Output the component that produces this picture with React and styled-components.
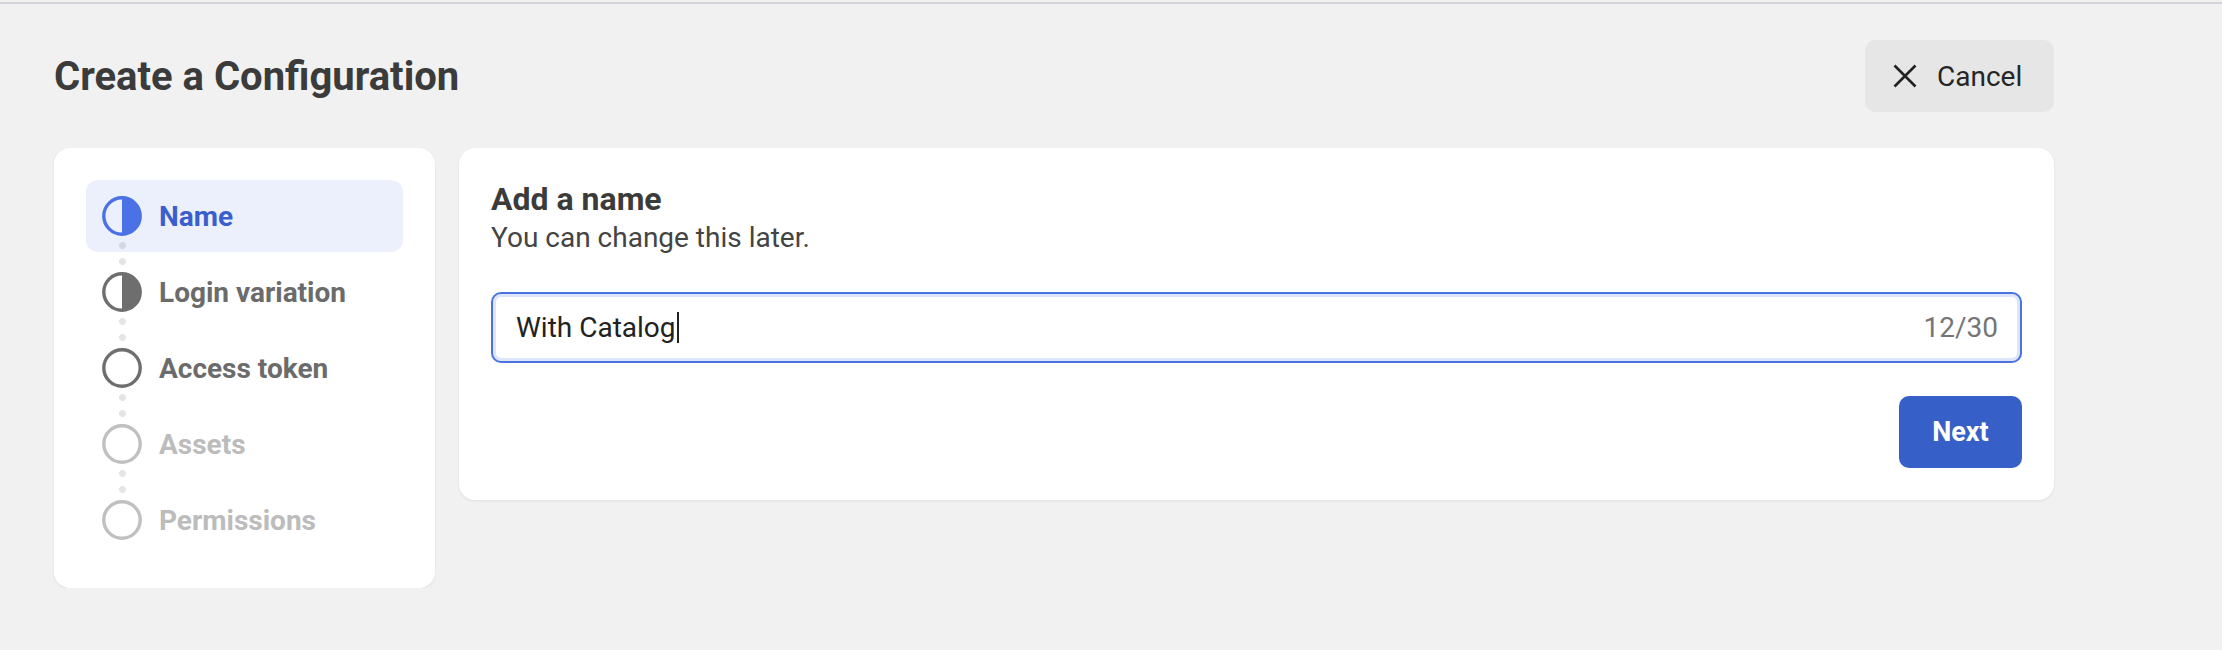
import React from "react";
import styled, { createGlobalStyle } from "styled-components";

const GlobalStyle = createGlobalStyle`
  html, body {
    margin: 0;
    padding: 0;
    background: #f1f1f1;
    font-family: Roboto, "Liberation Sans", Arial, sans-serif;
  }
  * {
    box-sizing: border-box;
  }
`;

const steps = [
  { label: "Name", state: "active" },
  { label: "Login variation", state: "partial" },
  { label: "Access token", state: "open" },
  { label: "Assets", state: "upcoming" },
  { label: "Permissions", state: "upcoming" },
];

const tones = {
  active: { ring: "#4a72e6", text: "#3a5fcc" },
  partial: { ring: "#6e6e6e", text: "#6b6b6b" },
  open: { ring: "#6e6e6e", text: "#6b6b6b" },
  upcoming: { ring: "#c0c0c0", text: "#bcbcbc" },
};

const StepIcon = ({ state }) => {
  const color = tones[state].ring;
  const half = state === "active" || state === "partial";
  return (
    <svg width="40" height="40" viewBox="0 0 40 40">
      <circle cx="20" cy="20" r="18.2" fill="none" stroke={color} strokeWidth="3.4" />
      {half && <path d="M20 1.8 A18.2 18.2 0 0 1 20 38.2 Z" fill={color} />}
    </svg>
  );
};

const CloseIcon = () => (
  <svg width="24" height="24" viewBox="0 0 24 24">
    <path d="M1.5 1.5 L22.5 22.5 M22.5 1.5 L1.5 22.5" stroke="#222" strokeWidth="2.6" />
  </svg>
);

const App = () => {
  return (
    <>
      <GlobalStyle />
      <TopRule />
      <Page>
        <Header>
          <Title>Create a Configuration</Title>
          <CancelButton>
            <CloseIcon />
            Cancel
          </CancelButton>
        </Header>
        <Layout>
          <StepsCard>
            {steps.map((step, i) => (
              <Step key={step.label} $state={step.state} $last={i === steps.length - 1}>
                <StepIcon state={step.state} />
                <StepLabel $state={step.state}>{step.label}</StepLabel>
              </Step>
            ))}
          </StepsCard>
          <FormCard>
            <FormTitle>Add a name</FormTitle>
            <FormHint>You can change this later.</FormHint>
            <Field>
              <FieldValue>With Catalog</FieldValue>
              <Caret />
              <Counter>12/30</Counter>
            </Field>
            <Actions>
              <NextButton>Next</NextButton>
            </Actions>
          </FormCard>
        </Layout>
      </Page>
    </>
  );
};

const TopRule = styled.div`
  height: 2px;
  margin-top: 2px;
  background: #d4d4da;
`;

const Page = styled.div`
  width: 2000px;
  margin-left: 54px;
  padding-top: 36px;
`;

const Header = styled.div`
  display: flex;
  align-items: center;
  justify-content: space-between;
  height: 72px;
`;

const Title = styled.h1`
  margin: 0;
  font-size: 40px;
  font-weight: 700;
  color: #3b3b3b;
`;

const CancelButton = styled.button`
  display: flex;
  align-items: center;
  gap: 20px;
  width: 189px;
  height: 72px;
  padding: 0 0 0 28px;
  border: none;
  border-radius: 10px;
  background: #e6e6e6;
  font-family: inherit;
  font-size: 28px;
  color: #262626;
`;

const Layout = styled.div`
  display: grid;
  grid-template-columns: 381px 1fr;
  gap: 24px;
  align-items: start;
  margin-top: 36px;
`;

const Card = styled.div`
  background: #fff;
  border-radius: 16px;
  box-shadow: 0 1px 3px rgba(0, 0, 0, 0.08);
  padding: 32px;
`;

const StepsCard = styled(Card)`
  display: flex;
  flex-direction: column;
  gap: 4px;
`;

const Step = styled.div`
  position: relative;
  display: flex;
  align-items: center;
  gap: 17px;
  height: 72px;
  padding: 0 16px;
  border-radius: 12px;
  background: ${(p) => (p.$state === "active" ? "#ebf0fc" : "transparent")};

  &::after {
    content: "";
    display: ${(p) => (p.$last ? "none" : "block")};
    position: absolute;
    left: 32.5px;
    top: 62px;
    width: 7px;
    height: 23px;
    z-index: 1;
    background: radial-gradient(circle at 3.5px 3.5px, rgba(0, 0, 0, 0.1) 3.2px, transparent 3.8px) 0 0 / 7px 16px repeat-y;
  }
`;

const StepLabel = styled.span`
  font-size: 28px;
  font-weight: 700;
  color: ${(p) => tones[p.$state].text};
`;

const FormCard = styled(Card)`
  display: flex;
  flex-direction: column;
`;

const FormTitle = styled.h2`
  margin: 0;
  font-size: 32px;
  line-height: 1.2;
  font-weight: 700;
  color: #3b3b3b;
`;

const FormHint = styled.p`
  margin: 2px 0 0;
  font-size: 28px;
  line-height: 36px;
  color: #444;
`;

const Field = styled.div`
  display: flex;
  align-items: center;
  height: 71px;
  margin-top: 35.5px;
  padding: 0 22px 0 23px;
  border: 2px solid #4a72e0;
  border-radius: 10px;
  box-shadow: inset 0 0 0 3px #dce5fb;
  font-size: 28px;
`;

const FieldValue = styled.span`
  color: #222;
`;

const Caret = styled.span`
  width: 2px;
  height: 31px;
  margin-left: 1px;
  background: #222;
`;

const Counter = styled.span`
  margin-left: auto;
  color: #757575;
`;

const Actions = styled.div`
  display: flex;
  justify-content: flex-end;
  margin-top: 33px;
`;

const NextButton = styled.button`
  width: 123px;
  height: 72px;
  border: none;
  border-radius: 10px;
  background: #375fc8;
  color: #fff;
  font-family: inherit;
  font-size: 27px;
  font-weight: 700;
`;

export default App;
